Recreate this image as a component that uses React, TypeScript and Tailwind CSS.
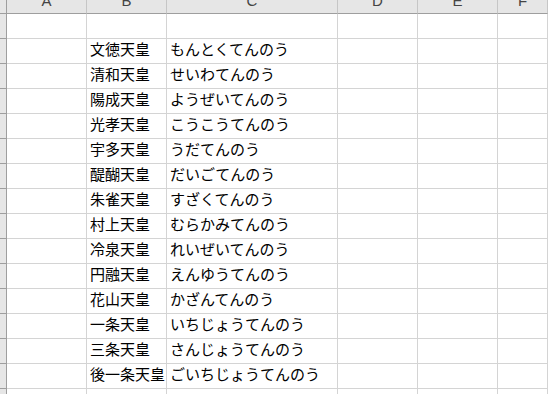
const COLS = ["A", "B", "C", "D", "E", "F"];

const EMPERORS: [string, string][] = [
  ["文徳天皇", "もんとくてんのう"],
  ["清和天皇", "せいわてんのう"],
  ["陽成天皇", "ようぜいてんのう"],
  ["光孝天皇", "こうこうてんのう"],
  ["宇多天皇", "うだてんのう"],
  ["醍醐天皇", "だいごてんのう"],
  ["朱雀天皇", "すざくてんのう"],
  ["村上天皇", "むらかみてんのう"],
  ["冷泉天皇", "れいぜいてんのう"],
  ["円融天皇", "えんゆうてんのう"],
  ["花山天皇", "かざんてんのう"],
  ["一条天皇", "いちじょうてんのう"],
  ["三条天皇", "さんじょうてんのう"],
  ["後一条天皇", "ごいちじょうてんのう"],
];

// blank row, the emperor list, then one trailing empty row
const ROWS: ([string, string] | null)[] = [null, ...EMPERORS, null];

const cell = "h-[25px] border-r border-b border-[#d4d4d4] overflow-visible whitespace-nowrap";

function Row({ data }: { data: [string, string] | null }) {
  return (
    <>
      <div className="h-[25px] border-r border-b border-[#9e9e9e] bg-[#e6e6e6]" />
      <div className={cell} />
      <div className={`${cell} relative z-10 pl-[3px] leading-[20px]`}>{data?.[0]}</div>
      <div className={`${cell} pl-[3px] leading-[20px]`}>{data?.[1]}</div>
      <div className={cell} />
      <div className={cell} />
      <div className={cell} />
    </>
  );
}

export default function App() {
  return (
    <div
      className="h-[394px] w-[548px] overflow-hidden bg-white text-[15px] text-black"
      style={{ fontFamily: '"Noto Sans CJK JP", "Noto Sans", sans-serif' }}
    >
      <div className="grid grid-cols-[7px_80px_80px_171px_80px_80px_1fr]">
        <div className="h-[14px] border-r border-b border-[#9e9e9e] bg-[#e6e6e6]" />
        {COLS.map((c) => (
          <div
            key={c}
            className="flex h-[14px] justify-center overflow-hidden border-r border-b border-r-[#c6c6c6] border-b-[#9e9e9e] bg-[#e6e6e6] text-[15px] leading-[17px] text-[#444]"
            style={{ fontFamily: '"Liberation Sans", Arial, sans-serif' }}
          >
            <span className="mt-[-8px]">{c}</span>
          </div>
        ))}
        {ROWS.map((r, i) => (
          <Row key={i} data={r} />
        ))}
      </div>
    </div>
  );
}
